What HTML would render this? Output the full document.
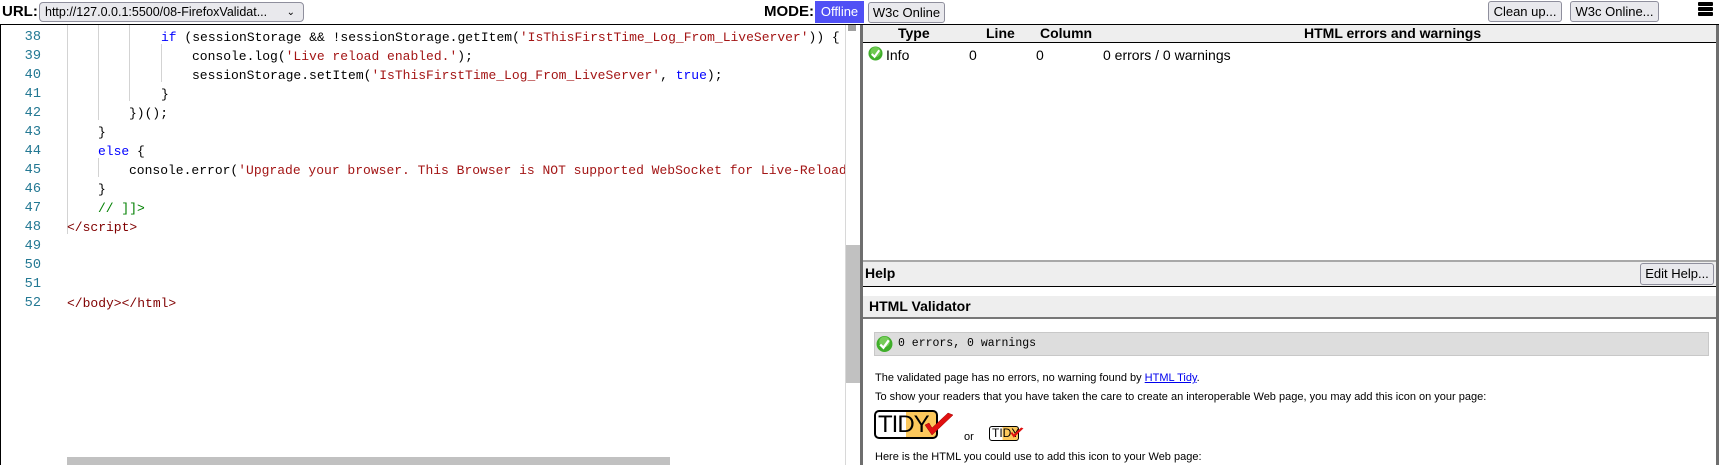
<!DOCTYPE html>
<html><head><meta charset="utf-8"><style>
*{margin:0;padding:0;box-sizing:border-box}
body{width:1719px;height:465px;overflow:hidden;background:#fff;font-family:"Liberation Sans",sans-serif;position:relative}
.a{position:absolute}
.btn{position:absolute;border:1px solid #8f8f9d;border-radius:3px;background:#e9e9ed;font-size:13px;text-align:center;line-height:19px;color:#000}
.code{font-family:"Liberation Mono",monospace;font-size:13px;white-space:pre;line-height:19px}
.ln{position:absolute;left:0;width:41px;text-align:right;color:#237893;font-size:13.6px}
.cl{position:absolute;color:#000}
.k{color:#0000ff}.s{color:#a31515}.t{color:#800000}.c{color:#008000}
.g{position:absolute;width:1px;background:#d3d3d3}
.hd{font-weight:bold;font-size:14px}
.p{font-size:11px;color:#000;position:absolute;left:875px}
</style></head><body>
<!-- top bar -->
<div class="a" style="left:2px;top:3px;font-size:15px;font-weight:bold">URL:</div>
<div class="btn" style="left:39px;top:2px;width:265px;height:20px;text-align:left;padding-left:5px;font-size:12.5px;border-radius:4px">http://127.0.0.1:5500/08-FirefoxValidat...<span style="position:absolute;right:8px;font-size:10px">&#8964;</span></div>
<div class="a" style="left:764px;top:3px;font-size:15px;font-weight:bold">MODE:</div>
<div class="a" style="left:815px;top:1px;width:49px;height:22px;background:#5050f5;color:#fff;font-size:13px;text-align:center;line-height:22px">Offline</div>
<div class="btn" style="left:868px;top:2px;width:77px;height:21px">W3c Online</div>
<div class="btn" style="left:1488px;top:1px;width:74px;height:21px">Clean up...</div>
<div class="btn" style="left:1570px;top:1px;width:89px;height:21px">W3c Online...</div>
<div class="a" style="left:1698px;top:2px;width:15px;height:4px;background:#000;box-shadow:0 5px 0 #000,0 10px 0 #000;border-radius:1px"></div>
<div class="a" style="left:0;top:24px;width:1719px;height:1px;background:#000"></div>

<!-- editor -->
<div class="a" style="left:0;top:25px;width:1px;height:440px;background:#000"></div>
<div class="a code" style="left:0;top:25px;width:858px;height:440px;overflow:hidden">
<div class="g" style="left:67px;top:0;height:209px"></div>
<div class="g" style="left:98px;top:0;height:95px"></div>
<div class="g" style="left:129px;top:0;height:76px"></div>
<div class="g" style="left:161px;top:19px;height:38px"></div>
<div class="g" style="left:98px;top:133px;height:19px"></div>
<span class="ln" style="top:3px">38</span><span class="cl" style="left:161px;top:3px"><span class="k">if</span> (sessionStorage &amp;&amp; !sessionStorage.getItem(<span class="s">'IsThisFirstTime_Log_From_LiveServer'</span>)) {</span>
<span class="ln" style="top:22px">39</span><span class="cl" style="left:192px;top:22px">console.log(<span class="s">'Live reload enabled.'</span>);</span>
<span class="ln" style="top:41px">40</span><span class="cl" style="left:192px;top:41px">sessionStorage.setItem(<span class="s">'IsThisFirstTime_Log_From_LiveServer'</span>, <span class="k">true</span>);</span>
<span class="ln" style="top:60px">41</span><span class="cl" style="left:161px;top:60px">}</span>
<span class="ln" style="top:79px">42</span><span class="cl" style="left:129px;top:79px">})();</span>
<span class="ln" style="top:98px">43</span><span class="cl" style="left:98px;top:98px">}</span>
<span class="ln" style="top:117px">44</span><span class="cl" style="left:98px;top:117px"><span class="k">else</span> {</span>
<span class="ln" style="top:136px">45</span><span class="cl" style="left:129px;top:136px">console.error(<span class="s">'Upgrade your browser. This Browser is NOT supported WebSocket for Live-Reload.'</span>);</span>
<span class="ln" style="top:155px">46</span><span class="cl" style="left:98px;top:155px">}</span>
<span class="ln" style="top:174px">47</span><span class="cl c" style="left:98px;top:174px">// ]]&gt;</span>
<span class="ln" style="top:193px">48</span><span class="cl t" style="left:67px;top:193px">&lt;/script&gt;</span>
<span class="ln" style="top:212px">49</span>
<span class="ln" style="top:231px">50</span>
<span class="ln" style="top:250px">51</span>
<span class="ln" style="top:269px">52</span><span class="cl t" style="left:67px;top:269px">&lt;/body&gt;&lt;/html&gt;</span>
</div>
<div class="a" style="left:845px;top:25px;width:1px;height:440px;background:#d8d8d8"></div>
<div class="a" style="left:846px;top:25px;width:14px;height:440px;background:#fff"></div>
<div class="a" style="left:848px;top:25px;width:8px;height:6px;background:#a0a0a0"></div>
<div class="a" style="left:846px;top:245px;width:14px;height:138px;background:#c1c1c1"></div>
<div class="a" style="left:67px;top:457px;width:603px;height:8px;background:#c1c1c1"></div>
<div class="a" style="left:860px;top:25px;width:3px;height:440px;background:#6e6e6e"></div>

<!-- right pane -->
<div class="a" style="left:863px;top:25px;width:853px;height:18px;background:#eeeeee;border-bottom:1px solid #000"></div>
<div class="a hd" style="left:898px;top:25px">Type</div>
<div class="a hd" style="left:986px;top:25px">Line</div>
<div class="a hd" style="left:1040px;top:25px">Column</div>
<div class="a hd" style="left:1304px;top:25px">HTML errors and warnings</div>
<svg class="a" style="left:868px;top:46px" width="15" height="15" viewBox="0 0 16 16"><circle cx="8" cy="8" r="7.5" fill="#3fae2a"/><circle cx="8" cy="6.5" r="5.5" fill="#8fdc6c" opacity=".6"/><path d="M4 8.5l3 3 5-7" stroke="#fff" stroke-width="2.2" fill="none"/></svg>
<div class="a" style="left:886px;top:47px;font-size:14px">Info</div>
<div class="a" style="left:969px;top:47px;font-size:14px">0</div>
<div class="a" style="left:1036px;top:47px;font-size:14px">0</div>
<div class="a" style="left:1103px;top:47px;font-size:14px">0 errors / 0 warnings</div>
<div class="a" style="left:1716px;top:25px;width:3px;height:440px;background:#6e6e6e"></div>

<div class="a" style="left:863px;top:260px;width:853px;height:27px;background:#eeeeee;border-top:2px solid #a8a8a8;border-bottom:1px solid #000"></div>
<div class="a hd" style="left:865px;top:265px">Help</div>
<div class="btn" style="left:1640px;top:263px;width:74px;height:22px;line-height:20px">Edit Help...</div>
<div class="a" style="left:863px;top:296px;width:853px;height:23px;background:#eeeeee;border-bottom:2px solid #777"></div>
<div class="a hd" style="left:869px;top:298px">HTML Validator</div>

<div class="a" style="left:874px;top:332px;width:835px;height:24px;background:#dddddd;border:1px solid #c8c8c8"></div>
<svg class="a" style="left:876px;top:335px" width="17" height="18" viewBox="0 0 16 16"><circle cx="8" cy="8" r="7.5" fill="#3fae2a"/><circle cx="8" cy="6" r="5" fill="#9be07a" opacity=".6"/><path d="M4 8.5l3 3 5-7" stroke="#fff" stroke-width="2.2" fill="none"/></svg>
<div class="a" style="left:898px;top:337px;font-family:'Liberation Mono',monospace;font-size:11.5px">0 errors, 0 warnings</div>
<div class="p" style="top:372px">The validated page has no errors, no warning found by <span style="color:#00e;text-decoration:underline">HTML Tidy</span>.</div>
<div class="p" style="top:391px">To show your readers that you have taken the care to create an interoperable Web page, you may add this icon on your page:</div>
<div class="a" style="left:874px;top:410px;width:64px;height:29px;border:2px solid #000;border-radius:5px;background:linear-gradient(90deg,#fff 50%,#fcc85c 50%);font-size:24px;line-height:25px;padding-left:2px;letter-spacing:-1px">TIDY</div>
<svg class="a" style="left:924px;top:412px" width="30" height="26" viewBox="0 0 30 26"><path d="M1 13l7 10L29 3l-5-2L8 16l-3-5z" fill="#e01010" stroke="#900" stroke-width=".5"/></svg>
<div class="p" style="left:964px;top:431px">or</div>
<div class="a" style="left:989px;top:426px;width:30px;height:15px;border:1px solid #000;border-radius:3px;background:linear-gradient(90deg,#fff 45%,#fcc85c 45%);font-size:12px;line-height:13px;padding-left:2px">TIDY</div>
<svg class="a" style="left:1010px;top:427px" width="14" height="12" viewBox="0 0 30 26"><path d="M1 13l7 10L29 3l-5-2L8 16l-3-5z" fill="#e01010"/></svg>
<div class="p" style="top:451px">Here is the HTML you could use to add this icon to your Web page:</div>
</body></html>
